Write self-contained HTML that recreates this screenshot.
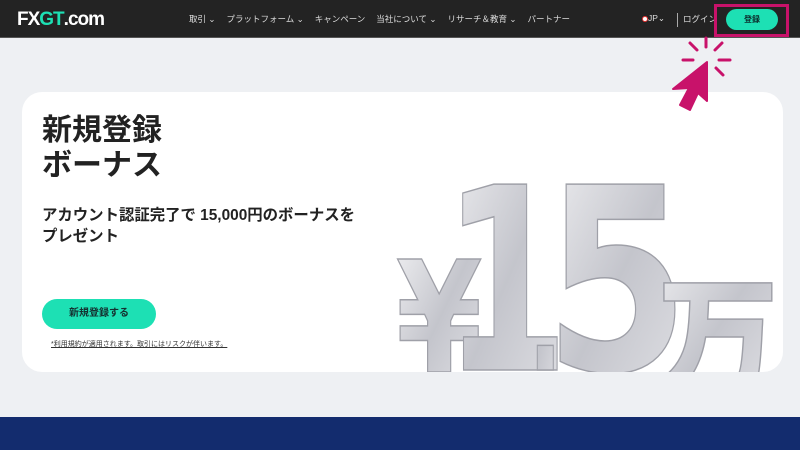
<!DOCTYPE html>
<html><head><meta charset="utf-8"><style>
*{margin:0;padding:0;box-sizing:border-box}
body{width:800px;height:450px;overflow:hidden;background:#eef0f3;font-family:"Liberation Sans","Noto Sans CJK JP",sans-serif;position:relative}
.nav{position:absolute;left:0;top:0;width:800px;height:38px;background:#232323;border-bottom:1px solid #555}
.logo{position:absolute;left:17px;top:9px;color:#fff;font-weight:bold;font-size:19px;letter-spacing:-1px}
.logo b{color:#1de0b4}
.menu{position:absolute;left:189px;top:13px;color:#ddd;font-size:8.5px;white-space:nowrap}
.menu span{margin-right:11px}
.r{position:absolute;top:13px;color:#ddd;font-size:8.5px}
.reg{position:absolute;left:726px;top:9px;width:52px;height:21px;border-radius:11px;background:#1de0b4;color:#0b2a2a;font-size:8px;font-weight:bold;text-align:center;line-height:21px}
.box{position:absolute;left:714px;top:4px;width:75px;height:33px;border:3px solid #c8126a}
.card{position:absolute;left:22px;top:92px;width:761px;height:280px;background:#fff;border-radius:20px;overflow:hidden}
h1{position:absolute;left:42px;top:113px;font-size:30px;line-height:35px;font-weight:bold;color:#222}
.sub{position:absolute;left:42px;top:205px;font-size:15.4px;line-height:21px;font-weight:bold;color:#222}
.btn{position:absolute;left:42px;top:299px;width:114px;height:30px;border-radius:15px;background:#1de0b4;color:#153030;font-size:10px;font-weight:bold;text-align:center;line-height:30px}
.note{position:absolute;left:51px;top:339px;font-size:7px;color:#333;text-decoration:underline}
.navy{position:absolute;left:0;top:417px;width:800px;height:33px;background:#132c6e}
</style></head><body>
<div class="nav">
<div class="logo">FX<b>GT</b>.com</div>
<div class="menu"><span>取引 ⌄</span><span>プラットフォーム ⌄</span><span>キャンペーン</span><span>当社について ⌄</span><span>リサーチ＆教育 ⌄</span><span>パートナー</span></div>
<div class="r" style="left:642px"><span style="display:inline-block;width:6px;height:6px;border-radius:50%;background:#fff;border:1.5px solid #e33;vertical-align:middle"></span>JP⌄</div>
<div style="position:absolute;left:677px;top:13px;width:1px;height:14px;background:#aaa"></div>
<div class="r" style="left:683px">ログイン</div>
<div class="reg">登録</div>
<div class="box"></div>
</div>
<div class="card">
<svg width="761" height="280" style="position:absolute;left:0;top:0">
<defs><linearGradient id="g" x1="0" y1="0" x2="1" y2="1"><stop offset="0" stop-color="#f2f2f4"/><stop offset=".5" stop-color="#c4c5cc"/><stop offset="1" stop-color="#e4e4e8"/></linearGradient></defs>
<g style="font-family:'DejaVu Sans',sans-serif;font-weight:bold" fill="url(#g)" stroke="#9fa0a8" stroke-width="1.5">
<text transform="translate(374,280) scale(0.8,1)" font-size="155">¥</text>
<text transform="translate(420,278) scale(0.72,1)" font-size="255">1</text>
<text transform="translate(506,278) scale(0.7,1)" font-size="130">.</text>
<text transform="translate(522,278) scale(0.82,1)" font-size="255">5</text>
<text transform="translate(635,292) scale(0.95,1)" style="font-family:'Noto Sans CJK JP'" font-weight="900" font-size="128">万</text>
</g>
</svg>
</div>
<h1>新規登録<br>ボーナス</h1>
<div class="sub">アカウント認証完了で 15,000円のボーナスを<br>プレゼント</div>
<div class="btn">新規登録する</div>
<div class="note">*利用規約が適用されます。取引にはリスクが伴います。</div>
<svg style="position:absolute;left:0;top:0" width="800" height="450">
<g stroke="#c8126a" stroke-width="3" stroke-linecap="round">
<line x1="706" y1="38" x2="706" y2="47"/><line x1="690" y1="43" x2="697" y2="50"/><line x1="722" y1="43" x2="715" y2="50"/>
<line x1="683" y1="60" x2="693" y2="60"/><line x1="719" y1="60" x2="730" y2="60"/><line x1="716" y1="68" x2="723" y2="75"/></g>
<path d="M707 62 L707 101 L698 93 L690 110 L680 105 L689 88 L673 89 Z" fill="#c8126a" stroke="#c8126a" stroke-width="2" stroke-linejoin="round"/>
</svg>
<div class="navy"></div>
</body></html>
